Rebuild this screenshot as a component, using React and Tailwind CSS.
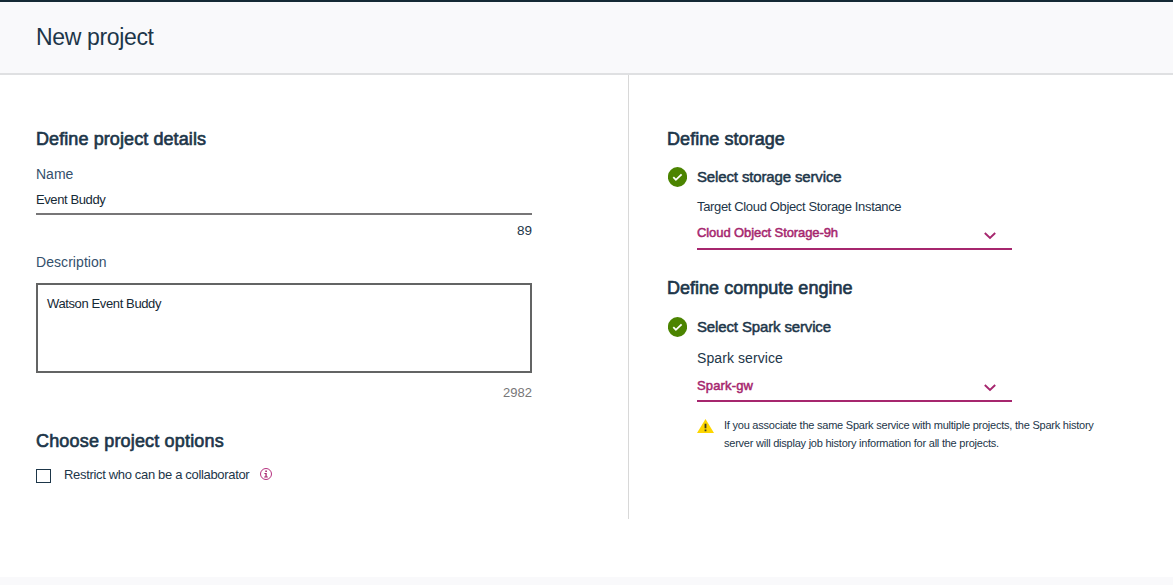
function CheckBadge() {
  return (
    <svg className="ml-px h-5 w-[19px] shrink-0" viewBox="0 0 19 20">
      <ellipse cx="9.5" cy="10" rx="9.6" ry="9.9" fill="#4b8400" />
      <path d="M5.3 10.2l2.6 2.6 5.7-5.5" fill="none" stroke="#fff" strokeWidth="1.8" />
    </svg>
  );
}

function Chevron({ className }) {
  return (
    <svg className={`h-2 w-3 shrink-0 ${className}`} viewBox="0 0 12 8">
      <path d="M0.8 1l5.2 5 5.2-5" fill="none" stroke="#a6266e" strokeWidth="1.9" />
    </svg>
  );
}

function Heading({ className, children }) {
  return (
    <h2 className={`text-[18px] leading-5 whitespace-nowrap [-webkit-text-stroke:0.65px_#1d3649] ${className}`}>
      {children}
    </h2>
  );
}

function Step({ className, children }) {
  return (
    <div className={`flex h-5 items-center gap-2.5 ${className}`}>
      <CheckBadge />
      <h3 className="text-[15px] leading-5 tracking-[-0.14px] whitespace-nowrap [-webkit-text-stroke:0.5px_#1d3649]">
        {children}
      </h3>
    </div>
  );
}

export default function App() {
  return (
    <div className="flex h-[585px] w-[1173px] flex-col overflow-hidden bg-white font-['Liberation_Sans',Arial,sans-serif] text-[#1d3649]">
      <header className="h-[75px] shrink-0 border-t-2 border-b-2 border-t-[#152935] border-b-[#dfe0e2] bg-[#f9f9fb] pt-[20px] pl-9">
        <h1 className="text-[23px] leading-[30px] tracking-[-0.35px]">New project</h1>
      </header>

      <main className="flex h-[502px] shrink-0">
        <section className="h-[444px] w-[629px] shrink-0 border-r border-[#d8d8d8] pt-[54px] pl-9">
          <div className="w-[496px]">
            <Heading className="tracking-[0.09px]">Define project details</Heading>
            <label className="mt-[15px] block text-[14px] leading-5 text-[#34506c]">Name</label>
            <input
              className="mt-1.5 block h-[25px] w-full border-b-2 border-[#777677] pb-[5px] text-[13px] leading-[18px] tracking-[-0.4px] text-[#152935] outline-none"
              defaultValue="Event Buddy"
            />
            <p className="mt-1.5 text-right text-[13.5px] leading-5">89</p>
            <label className="mt-[11px] block text-[14px] leading-5 tracking-[0.06px] text-[#34506c]">Description</label>
            <textarea
              className="mt-[11px] block h-[90px] w-full resize-none border-2 border-[#636464] px-[9px] pt-[9px] text-[13px] leading-5 tracking-[-0.38px] text-[#152935] outline-none"
              defaultValue="Watson Event Buddy"
            />
            <p className="mt-[10px] text-right text-[13px] leading-5 text-[#777677]">2982</p>
            <Heading className="mt-[28px] tracking-[0.17px]">Choose project options</Heading>
            <div className="mt-[14px] flex h-5">
              <span className="mt-1 h-[14px] w-[15px] shrink-0 border border-[#1d3649]" />
              <span className="ml-[13px] w-[187px] text-[13px] leading-5 tracking-[-0.33px] whitespace-nowrap">
                Restrict who can be a collaborator
              </span>
              <svg className="ml-[9px] mt-[3px] h-3 w-3" viewBox="0 0 12 12">
                <circle cx="6" cy="6" r="5.5" fill="none" stroke="#b5307e" />
                <path d="M5.3 2.5h1.6v1.4H5.3zM4.4 4.9h2.3v3.5h1.1v1H4.2v-1h1.2V5.9h-1z" fill="#a6266e" />
              </svg>
            </div>
          </div>
        </section>

        <section className="pt-[54px] pl-[38px]">
          <Heading className="tracking-[0.06px]">Define storage</Heading>
          <Step className="mt-[18px]">Select storage service</Step>
          <div className="ml-[30px] w-[315px]">
            <p className="mt-2.5 text-[13px] leading-5 tracking-[-0.35px] whitespace-nowrap">
              Target Cloud Object Storage Instance
            </p>
            <div className="mt-1.5 flex h-[27px] justify-between border-b-2 border-[#a6266e] pr-4">
              <span className="text-[13px] leading-5 tracking-[-0.09px] whitespace-nowrap text-[#a6266e] [-webkit-text-stroke:0.5px_#a6266e]">
                Cloud Object Storage-9h
              </span>
              <Chevron className="mt-[9px]" />
            </div>
          </div>

          <Heading className="mt-7 tracking-[0.02px]">Define compute engine</Heading>
          <Step className="mt-[19px]">Select Spark service</Step>
          <div className="ml-[30px] w-[315px]">
            <p className="mt-[11px] text-[14px] leading-5 tracking-[0.08px] whitespace-nowrap">Spark service</p>
            <div className="mt-2 flex h-[26px] justify-between border-b-2 border-[#a6266e] pr-4">
              <span className="text-[13px] leading-5 tracking-[0.15px] whitespace-nowrap text-[#a6266e] [-webkit-text-stroke:0.5px_#a6266e]">
                Spark-gw
              </span>
              <Chevron className="mt-2" />
            </div>
          </div>
          <div className="mt-[14px] ml-[30px] flex">
            <svg className="mt-[3px] h-[14px] w-[17px] shrink-0" viewBox="0 0 17 14">
              <path d="M8.5 0L17 14H0z" fill="#fdd600" />
              <path d="M7.6 4.7h1.8v4.5H7.6zM7.6 10.5h1.8v1.8H7.6z" fill="#3b3b25" />
            </svg>
            <p className="ml-2.5 text-[11px] leading-[18px] tracking-[-0.23px] whitespace-nowrap">
              If you associate the same Spark service with multiple projects, the Spark history
              <br />
              server will display job history information for all the projects.
            </p>
          </div>
        </section>
      </main>

      <footer className="h-2 shrink-0 bg-[#f9f9fb]" />
    </div>
  );
}
